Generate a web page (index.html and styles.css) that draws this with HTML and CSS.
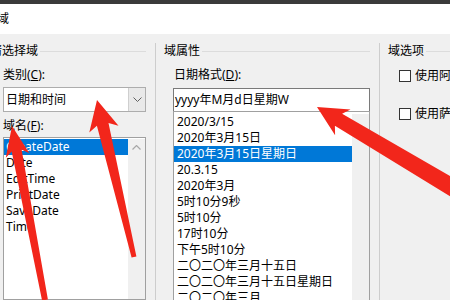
FILE: index.html
```html
<!DOCTYPE html>
<html lang="zh-CN">
<head>
<meta charset="utf-8">
<title>域</title>
<link rel="stylesheet" href="styles.css">
</head>
<body>
<div class="topbar"></div>
<div class="titlebar"><span class="title">域</span></div>
<div class="main">
  <section class="col col1">
    <div class="group-head"><span>请选择域</span><span class="rule"></span></div>
    <div class="label lbl-cat">类别(<u>C</u>):</div>
    <div class="combo">
      <span class="combo-text">日期和时间</span>
      <span class="combo-btn"><svg width="9" height="5" viewBox="0 0 9 5"><polyline points="0.5,0.5 4.5,4.5 8.5,0.5" fill="none" stroke="#606060" stroke-width="1"/></svg></span>
    </div>
    <div class="label lbl-name">域名(<u>F</u>):</div>
    <div class="listbox names">
      <ul class="items">
        <li class="sel">CreateDate</li>
        <li>Date</li>
        <li>EditTime</li>
        <li>PrintDate</li>
        <li>SaveDate</li>
        <li>Time</li>
      </ul>
      <div class="vscroll"><svg width="9" height="5" viewBox="0 0 9 5"><polyline points="0.5,4.5 4.5,0.5 8.5,4.5" fill="none" stroke="#a8a8a8" stroke-width="1.2"/></svg></div>
    </div>
  </section>
  <div class="sep"></div>
  <section class="col col2">
    <div class="group-head"><span>域属性</span><span class="rule"></span></div>
    <div class="content">
      <div class="label lbl-fmt">日期格式(<u>D</u>):</div>
      <div class="textbox">yyyy年M月d日星期W</div>
      <div class="listbox formats">
        <ul class="items">
          <li>2020/3/15</li>
          <li>2020年3月15日</li>
          <li class="sel">2020年3月15日星期日</li>
          <li>20.3.15</li>
          <li>2020年3月</li>
          <li>5时10分9秒</li>
          <li>5时10分</li>
          <li>17时10分</li>
          <li>下午5时10分</li>
          <li>二〇二〇年三月十五日</li>
          <li>二〇二〇年三月十五日星期日</li>
          <li>二〇二〇年三月</li>
        </ul>
        <div class="vscroll"></div>
      </div>
    </div>
  </section>
  <div class="sep"></div>
  <section class="col col3">
    <div class="group-head"><span>域选项</span><span class="rule"></span></div>
    <div class="check first"><span class="box"></span><span class="ctext">使用阿拉伯字符(A)</span></div>
    <div class="check second"><span class="box"></span><span class="ctext">使用萨卡纪年历(K)</span></div>
  </section>
</div>
<svg class="arrows" width="450" height="300" viewBox="0 0 450 300">
  <polygon fill="#f2261b" points="12,126 29.4,153.3 21.6,149.6 47.9,299.4 42.1,300.6 11.7,151.5 5.8,157.7"/>
  <polygon fill="#f2261b" points="97,100 118.5,125.8 108.5,122.9 136.4,256.4 131.6,257.6 96.9,125.7 89.3,132.6"/>
  <polygon fill="#f2261b" points="317,107 350.5,109.4 342.1,113.8 474.6,190.3 465.4,205.7 334.9,125.8 335.1,135.2"/>
</svg>
</body>
</html>
```

FILE: styles.css
```css
* { box-sizing: border-box; }

body {
  margin: 0;
  width: 450px;
  height: 300px;
  overflow: hidden;
  position: relative;
  background: #f0f0f0;
  color: #000;
  font-family: "Noto Sans", "Noto Sans CJK SC", sans-serif;
  font-size: 12px;
  line-height: 16px;
}

ul { list-style: none; margin: 0; padding: 0; }

.topbar { height: 4px; background: #3a3a3a; }

.titlebar {
  height: 30px;
  background: #fff;
  display: flex;
  align-items: center;
}
.title { margin-left: -3px; }

.main {
  display: flex;
  height: 266px;
  padding-top: 9px;
}

.col { display: flex; flex-direction: column; white-space: nowrap; }
.col1 { width: 155px; flex: none; padding: 0 9px 0 3px; }
.col2 { width: 223px; flex: none; padding: 0 9px; }
.col3 { flex: 1; padding-left: 8px; overflow: hidden; }

.sep { width: 1px; flex: none; background: #cdcdcd; }

.group-head {
  display: flex;
  align-items: center;
  height: 16px;
}
.group-head .rule {
  flex: 1;
  height: 1px;
  background: #dcdcdc;
  margin-left: 2px;
}
.col1 .group-head { margin-left: -13px; }
.col2 .group-head { margin-left: -1px; }

.label { height: 16px; }
.lbl-cat { margin-top: 8px; }
.lbl-name { margin-top: 6px; }

.combo {
  margin-top: 4px;
  height: 26px;
  background: #fff;
  border: 1px solid #adadad;
  display: flex;
  align-items: center;
}
.combo-text { flex: 1; padding-left: 2px; }
.combo-btn {
  width: 17px;
  align-self: stretch;
  background: #e9e9e9;
  border-left: 1px solid #cfcfcf;
  display: flex;
  align-items: center;
  justify-content: center;
}

.listbox {
  background: #fff;
  border: 1px solid #a0a0a0;
  display: flex;
}
.listbox .items { flex: 1; }
.listbox li { height: 16px; }
.listbox li.sel { background: #0078d7; color: #fff; }

.vscroll {
  width: 17px;
  flex: none;
  background: #f0f0f0;
  display: flex;
  justify-content: center;
  padding-top: 6px;
}

.names { margin-top: 3px; height: 170px; padding-top: 1px; }
.names li { padding-left: 2px; }

.content { padding-left: 8px; }
.lbl-fmt { margin-top: 8px; padding-left: 1px; }

.textbox {
  margin-top: 5px;
  height: 24px;
  background: #fff;
  border: 1px solid #7a7a7a;
  padding: 3px 1px;
}

.formats { margin-top: -1px; height: 200px; padding-top: 2px; }
.formats li { padding-left: 3px; }

.check { display: flex; align-items: center; height: 16px; margin-left: 11px; }
.check.first { margin-top: 9px; }
.check.second { margin-top: 22px; }
.box {
  width: 12px;
  height: 12px;
  flex: none;
  background: #fff;
  border: 1px solid #333;
}
.ctext { margin-left: 4px; }

.arrows {
  position: absolute;
  left: 0;
  top: 0;
  pointer-events: none;
}
```
